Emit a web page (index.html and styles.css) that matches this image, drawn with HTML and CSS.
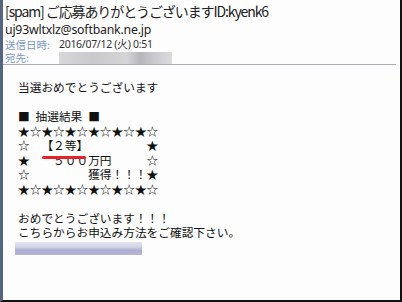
FILE: index.html
```html
<!DOCTYPE html>
<html lang="ja">
<head>
    <meta charset="UTF-8">
    <title>[spam] ご応募ありがとうございます</title>
    <link rel="stylesheet" href="styles.css">
</head>
<body>

    <div class="mail">
        <div class="header">
            <div class="subject">[spam] ご応募ありがとうございますID:kyenk6</div>
            <div class="from">uj93wltxlz@softbank.ne.jp</div>
            <div class="meta">
                <span class="label">送信日時:</span>
                <span class="value">2016/07/12 (火) 0:51</span>
            </div>
            <div class="meta">
                <span class="label">宛先:</span>
                <span class="blur-to"></span>
            </div>
        </div>

        <div class="content">
            <p class="line">当選おめでとうございます</p>
            <p class="line"></p>
            <p class="line">■&ensp;抽選結果&ensp;■</p>
            <p class="line">★☆★☆★☆★☆★☆★☆</p>
            <p class="line">☆　【２等】　　　　　★</p>
            <p class="line marked">★　　５００万円　　　☆<span class="red-mark"></span></p>
            <p class="line">☆　　　　　獲得！！！★</p>
            <p class="line">★☆★☆★☆★☆★☆★☆</p>
            <p class="line"></p>
            <p class="line">おめでとうございます！！！</p>
            <p class="line">こちらからお申込み方法をご確認下さい。</p>
            <p class="line"><span class="blur-link"></span></p>
        </div>
    </div>

</body>
</html>
```

FILE: styles.css
```css
body {
    margin: 0;
    background-color: white;
}

.mail {
    width: 402px;
    height: 302px;
    box-sizing: border-box;
    border-left: 3px solid #56657f;
    border-right: 2px solid #111;
    border-bottom: 2px solid #111;
    background-color: #fdfdfd;
    color: #222;
    font-family: "Noto Sans CJK JP", "Noto Sans", sans-serif;
}

.header {
    padding: 2px 0 0 2px;
    border-bottom: 1px solid #a9adb3;
    height: 62px;
    margin-right: 4px;
}

.subject {
    font-size: 14px;
    line-height: 19px;
    letter-spacing: -1.1px;
}

.from {
    font-family: "Noto Sans", sans-serif;
    font-size: 12.3px;
    line-height: 17px;
    letter-spacing: -0.2px;
}

.meta {
    display: flex;
    align-items: center;
    gap: 6px;
    height: 13px;
    line-height: 13px;
    font-size: 10.5px;
}

.label {
    width: 48px;
    color: #7c97c4;
}

.value {
    color: #333;
    font-family: "Noto Sans", sans-serif;
    letter-spacing: -0.3px;
}

.blur-to {
    width: 113px;
    height: 12px;
    background: linear-gradient(90deg, #d8d8da 0%, #c9c9cc 30%, #d5d5d8 60%, #b6b6ba 72%, #c4c4c8 80%, #dcdcdf 100%);
}

.content {
    padding: 15px 0 0 15px;
    font-size: 11.7px;
    color: #111;
    text-spacing-trim: space-all;
}

.line {
    margin: 0;
    height: 14.5px;
    line-height: 14.5px;
    white-space: pre;
}

.marked {
    position: relative;
}

.red-mark {
    position: absolute;
    left: 24px;
    top: 3px;
    width: 44px;
    height: 3px;
    border-radius: 2px;
    background-color: #e8202a;
}

.blur-link {
    display: inline-block;
    width: 127px;
    height: 13px;
    margin-left: -3px;
    vertical-align: middle;
    background: linear-gradient(180deg, #e4e4ee 0%, #d2d2e4 40%, #aeaed2 60%, #b4b4d6 100%);
}
```
